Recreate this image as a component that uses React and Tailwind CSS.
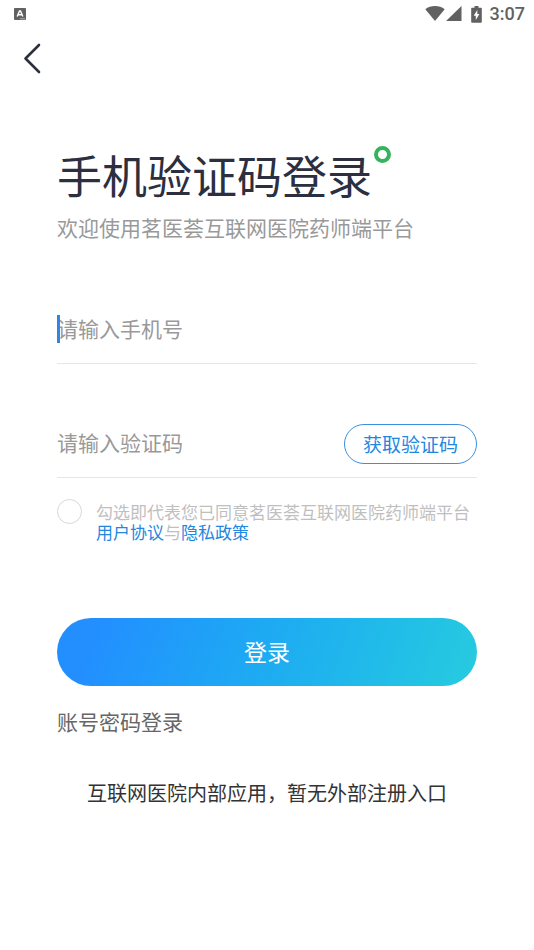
import { twMerge } from 'tailwind-merge'

function StatusBar() {
  return (
    <div className="flex h-7 items-center justify-between pl-[14px] pr-[9px] text-[#616161]">
      <svg className="h-3 w-3" viewBox="0 0 12 12" aria-hidden="true">
        <rect width="12" height="12" rx="1" fill="currentColor" />
        <path d="M3.2 8.6 5.5 3h1L8.8 8.6M4.2 6.8h3.6" fill="none" stroke="#fff" strokeWidth="1.4" />
        <path d="M6 10.8h5" stroke="#ccc" strokeWidth="0.8" />
      </svg>
      <div className="flex items-center">
        <svg className="h-4 w-5" viewBox="0 0 20 16" fill="currentColor" aria-hidden="true">
          <path d="M10 15 .3 3.3C3 1.1 6.4 0 10 0s7 1.1 9.700 3.300z" />
        </svg>
        <svg className="ml-px h-4 w-4" viewBox="0 0 16 16" fill="currentColor" aria-hidden="true">
          <path d="M15.500 0v15H0z" />
        </svg>
        <svg className="ml-[9px] h-[17px] w-[11px]" viewBox="0 0 11 17" aria-hidden="true">
          <path d="M3.500 0h4v1.700H10c.5 0 .8.4.8.8v13.400c0 .5-.3.800-.8.800H1c-.5 0-.8-.3-.8-.8V2.500c0-.4.3-.8.8-.8h2.500z" fill="currentColor" />
          <path d="M6.300 4 2.700 9.800h2.100v4.200l3.600-5.900H6.300z" fill="#fff" />
        </svg>
        <span className="ml-2 font-[Roboto,sans-serif] text-[18px] font-medium leading-5">3:07</span>
      </div>
    </div>
  )
}

function Field({ className, children }) {
  return (
    <div className={twMerge('flex h-[69px] items-end border-b border-[#e6e6e6] pb-[13px]', className)}>
      {children}
    </div>
  )
}

const inputClass =
  'h-11 w-full min-w-0 flex-1 bg-transparent text-[21px] text-[#333] caret-[#2f86e6] outline-none placeholder:text-[#999]'

export default function App() {
  return (
    <div className="min-h-screen bg-white font-['Noto_Sans_CJK_SC',sans-serif]">
      <StatusBar />
      <header className="flex h-[60px] items-center pl-[22px]">
        <button type="button" aria-label="返回">
          <svg className="h-8 w-5" viewBox="0 0 20 32" fill="none" stroke="#2b2f40" strokeWidth="2.600" strokeLinecap="round" strokeLinejoin="round" aria-hidden="true">
            <path d="M17 3 3.500 16.500 17 30" />
          </svg>
        </button>
      </header>

      <main className="px-[57px] pt-[63px] pb-10">
        <div className="flex items-start">
          <h1 className="text-[45px] leading-[48px] text-[#2b2f40]">手机验证码登录</h1>
          <span className="-mt-[5px] ml-0.5 h-[17px] w-[17px] shrink-0 rounded-full border-4 border-[#35b35f]" />
        </div>
        <p className="mt-[14px] text-[21px] leading-7 text-[#999]">欢迎使用茗医荟互联网医院药师端平台</p>

        <form onSubmit={(e) => e.preventDefault()}>
          <Field className="relative mt-[54px]">
            <input type="tel" aria-label="手机号" placeholder="请输入手机号" className={inputClass} />
            <span className="absolute bottom-5 left-0 h-7 w-[3px] bg-[#2f86e6]" />
          </Field>
          <Field className="mt-[45px]">
            <input type="text" inputMode="numeric" aria-label="验证码" placeholder="请输入验证码" className={inputClass} />
            <button type="button" className="h-10 w-[133px] shrink-0 rounded-full border border-[#3b8fdc] text-[19px] text-[#2387e0]">
              获取验证码
            </button>
          </Field>

          <div className="mt-[21px] flex items-start">
            <input
              id="agree"
              type="checkbox"
              className="h-[25px] w-[25px] shrink-0 appearance-none rounded-full border border-[#d8d8d8] checked:bg-[#2490f5]"
            />
            <div className="ml-[14px] pt-[3px] text-[17px] leading-5 text-[#bfbfbf]">
              <label htmlFor="agree" className="block">勾选即代表您已同意茗医荟互联网医院药师端平台</label>
              <div className="flex">
                <a href="#agreement" className="text-[#2387e0]">用户协议</a>
                <span>与</span>
                <a href="#privacy" className="text-[#2387e0]">隐私政策</a>
              </div>
            </div>
          </div>

          <button
            type="submit"
            className="mt-[76px] h-[68px] w-full rounded-full bg-linear-110 from-[#238fff] from-10% to-[#27cbdf] pb-0.5 text-[23px] text-white"
          >
            登录
          </button>
        </form>

        <a href="#password" className="mt-[21px] block text-[21px] leading-7 text-[#666]">账号密码登录</a>
        <p className="mt-[44px] text-center text-[20px] leading-7 text-[#333]">互联网医院内部应用，暂无外部注册入口</p>
      </main>
    </div>
  )
}
